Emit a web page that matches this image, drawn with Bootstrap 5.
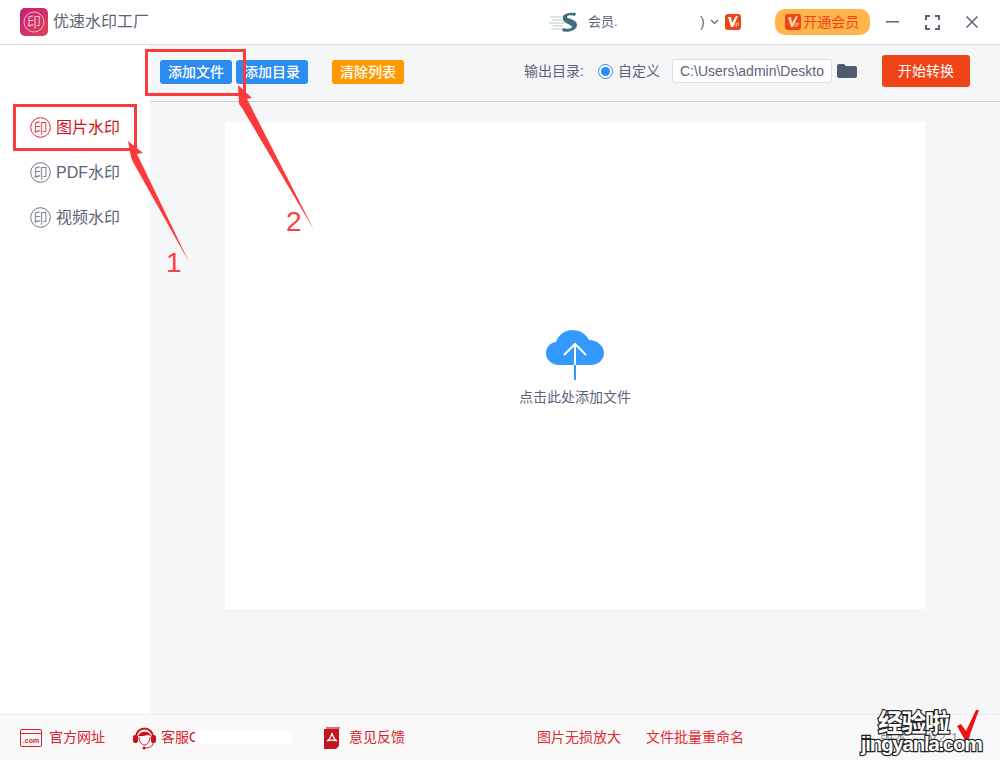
<!DOCTYPE html>
<html lang="zh-CN">
<head>
    <meta charset="UTF-8">
    <title>优速水印工厂</title>
    <link href="https://cdn.jsdelivr.net/npm/bootstrap@5.3.3/dist/css/bootstrap.min.css" rel="stylesheet">
    <style>
        body {
            background: #fff;
            color: #5a6478;
            font-family: "Liberation Sans", "Noto Sans CJK SC", sans-serif;
            font-size: 14px;
        }
        .app-shell { width: 1000px; height: 760px; overflow: hidden; position: relative; }

        .title-bar { height: 45px; border-bottom: 1px solid #dcdee2; padding-left: 20px; }
        .app-name { font-size: 16px; margin-left: 5px; width: 96px; white-space: nowrap; }
        .user-logo { margin-left: 400px; }
        .user-name { font-size: 13px; margin-left: 10px; width: 112px; }
        .user-chevron { margin-left: 5px; }
        .vip-small { margin-left: 6px; }
        .vip-pill {
            margin-left: 34px; width: 95px; height: 26px; border-radius: 10px;
            background: #ffb54c; color: #f14318;
        }
        .vip-pill span { margin-left: 2px; }
        .win-min { margin-left: 16px; }
        .win-max { margin-left: 26px; }
        .win-close { margin-left: 26px; }

        .middle-row { height: 669px; }
        .side-nav { width: 150px; padding-top: 60px; }
        .side-link { height: 45px; padding-left: 30px; font-size: 16px; color: #5a6478; }
        .side-link svg { margin-right: 5px; }
        .side-link text { fill-opacity: .8; }
        .side-link.current { color: #d0111b; }

        .work-area { width: 850px; background: #f5f6f8; }
        .tool-bar { height: 57px; border-bottom: 1px solid #cdcfd3; padding: 0 0 4px 10px; }
        .tool-btn {
            width: 72px; height: 24px; margin-top: 2px; padding: 0; border: 0; border-radius: 3px;
            color: #fff; font-size: 14px; font-weight: 500; line-height: 24px;
        }
        .tool-btn.blue { background: #2d8cf0; margin-right: 4px; }
        .tool-btn.amber { background: #ff9900; margin-left: 20px; }
        .out-label { font-size: 14px; margin-left: 120px; width: 60px; white-space: nowrap; }
        .radio-dot {
            width: 15px; height: 15px; margin-left: 14px; border-radius: 50%;
            border: 1px solid #2d8cf0; background: #fff; padding: 2px;
        }
        .radio-dot i { display: block; width: 100%; height: 100%; border-radius: 50%; background: #2d8cf0; }
        .radio-text { margin-left: 5px; }
        .path-box {
            width: 160px; height: 24px; margin-left: 12px; padding-left: 7px;
            background: #fff; border: 1px solid #dcdee2; border-radius: 3px;
            color: #5a6478; overflow: hidden; white-space: nowrap; line-height: 22px;
        }
        .folder-icon { margin-left: 5px; }
        .start-btn {
            width: 88px; height: 32px; margin-left: 25px; padding: 0; border: 0; border-radius: 3px;
            background: #f14318; color: #fff; font-size: 14px;
        }
        .drop-panel { width: 700px; height: 487px; margin: 20px 0 0 75px; background: #fff; }
        .drop-text { font-size: 14px; margin-top: 7px; }
        .drop-inner { padding-top: 7px; }

        .foot-bar { height: 46px; background: #f9f9fa; border-top: 1px solid #e8eaec; color: #d8212a; padding-left: 20px; }
        .foot-bar svg { flex: none; }
        .foot-web span { margin-left: 7px; }
        .foot-help { margin-left: 28px; }
        .foot-help span { margin-left: 5px; width: 131px; position: relative; }
        .redact { position: absolute; left: 34px; top: 3px; width: 97px; height: 14px; background: #fff; }
        .foot-mail { margin-left: 31px; }
        .foot-mail span { margin-left: 8px; }
        .foot-link-a { margin-left: 132px; color: #e02b33; }
        .foot-link-b { margin-left: 25px; color: #e02b33; }
        .version { margin-left: 136px; font-size: 13px; color: #8b93a3; letter-spacing: 1px; word-spacing: 16px; white-space: nowrap; }

        .mark-layer { position: absolute; left: 0; top: 0; pointer-events: none; }
        .mark-digit { font-family: "Liberation Sans", sans-serif; font-size: 28px; fill: #f94040; }
        .wm-cn { font-family: "Noto Sans CJK SC", sans-serif; font-size: 25px; font-weight: 700; }
        .wm-en { font-family: "Liberation Sans", sans-serif; font-size: 21px; font-weight: 700; }
        .wm-cn, .wm-en { fill: #fff; stroke: #222; stroke-width: 2.4px; paint-order: stroke; }
    </style>
</head>
<body>
<div class="app-shell d-flex flex-column">

    <!-- title bar -->
    <div class="title-bar d-flex align-items-center">
        <svg width="28" height="28" viewBox="0 0 28 28">
            <defs><linearGradient id="logoFill" x1="0" y1="0" x2="1" y2="1"><stop offset="0" stop-color="#c21f7a"/><stop offset="1" stop-color="#e0435a"/></linearGradient></defs>
            <rect width="28" height="28" rx="5" fill="url(#logoFill)"/>
            <circle cx="14" cy="14" r="10" fill="none" stroke="#f3b6c4" stroke-width="1"/>
            <text x="14" y="19" text-anchor="middle" font-size="14" fill="#f3b6c4" font-family="Noto Sans CJK SC">印</text>
        </svg>
        <span class="app-name">优速水印工厂</span>
        <svg class="user-logo" width="29" height="22" viewBox="0 0 29 22">
            <path d="M14 5c2-3 9-4 13-3l-1 3c-3-1-8-1-8 1 0 2 10 2 10 8 0 6-10 8-15 6l1-3c3 1 9 1 9-1 0-3-11-3-9-11z" fill="#3f6f7d"/>
            <path d="M1 6h12M3 9h11M0 12h15M4 15h10M2 18h12" stroke="#b4c8cc" stroke-width="1"/>
        </svg>
        <span class="user-name">会员.</span>
        <span>)</span>
        <svg class="user-chevron" width="9" height="6" viewBox="0 0 9 6"><path d="M1 1l3.500 3.500L8 1" fill="none" stroke="#5a6478" stroke-width="1.200"/></svg>
        <svg class="vip-small" width="16" height="16" viewBox="0 0 16 16">
            <rect width="16" height="16" rx="3" fill="#f14318"/>
            <path d="M3 3h3l1 6 4-7h2L8 13H6z" fill="#fff"/>
            <path d="M10 9v4M11.500 13V9h2v2h-2" fill="none" stroke="#ffd0c0" stroke-width=".7"/>
        </svg>
        <div class="vip-pill d-flex align-items-center justify-content-center">
            <svg width="16" height="16" viewBox="0 0 16 16">
                <rect width="16" height="16" rx="3" fill="#f14318"/>
                <path d="M3 3h3l1 6 4-7h2L8 13H6z" fill="#ffd9a0"/>
                <path d="M10 9v4M11.500 13V9h2v2h-2" fill="none" stroke="#ffd9a0" stroke-width=".7"/>
            </svg>
            <span>开通会员</span>
        </div>
        <svg class="win-min" width="13" height="2" viewBox="0 0 13 2"><rect width="13" height="1.500" fill="#5a6478"/></svg>
        <svg class="win-max" width="15" height="15" viewBox="0 0 15 15"><path d="M1 5V1h4M10 1h4v4M14 10v4h-4M5 14H1v-4" fill="none" stroke="#5a6478" stroke-width="2"/></svg>
        <svg class="win-close" width="12" height="12" viewBox="0 0 12 12"><path d="M.5.500l11 11M11.500.500l-11 11" stroke="#5a6478" stroke-width="1.500"/></svg>
    </div>

    <div class="middle-row d-flex">
        <!-- left nav -->
        <nav class="side-nav">
            <a class="side-link current d-flex align-items-center text-decoration-none" href="#">
                <svg width="21" height="21" viewBox="0 0 21 21"><circle cx="10.500" cy="10.500" r="9.800" fill="none" stroke="currentColor" stroke-width=".9"/><text x="10.500" y="15.500" text-anchor="middle" font-size="14" fill="currentColor" font-family="Noto Sans CJK SC">印</text></svg>
                图片水印
            </a>
            <a class="side-link d-flex align-items-center text-decoration-none" href="#">
                <svg width="21" height="21" viewBox="0 0 21 21"><circle cx="10.500" cy="10.500" r="9.800" fill="none" stroke="currentColor" stroke-width=".9"/><text x="10.500" y="15.500" text-anchor="middle" font-size="14" fill="currentColor" font-family="Noto Sans CJK SC">印</text></svg>
                PDF水印
            </a>
            <a class="side-link d-flex align-items-center text-decoration-none" href="#">
                <svg width="21" height="21" viewBox="0 0 21 21"><circle cx="10.500" cy="10.500" r="9.800" fill="none" stroke="currentColor" stroke-width=".9"/><text x="10.500" y="15.500" text-anchor="middle" font-size="14" fill="currentColor" font-family="Noto Sans CJK SC">印</text></svg>
                视频水印
            </a>
        </nav>

        <main class="work-area">
            <div class="tool-bar d-flex align-items-center">
                <button class="btn tool-btn blue">添加文件</button>
                <button class="btn tool-btn blue">添加目录</button>
                <button class="btn tool-btn amber">清除列表</button>
                <span class="out-label">输出目录:</span>
                <span class="radio-dot"><i></i></span>
                <span class="radio-text">自定义</span>
                <div class="path-box">C:\Users\admin\Deskto</div>
                <svg class="folder-icon" width="20" height="14" viewBox="0 0 20 14"><path d="M0 2a2 2 0 0 1 2-2h5l2 2h9a2 2 0 0 1 2 2v8a2 2 0 0 1-2 2H2a2 2 0 0 1-2-2z" fill="#525a72"/></svg>
                <button class="btn start-btn">开始转换</button>
            </div>
            <div class="drop-panel d-flex align-items-center justify-content-center">
                <div class="drop-inner d-flex flex-column align-items-center">
                    <svg width="58" height="50" viewBox="0 0 58 50">
                        <path d="M13 35C5 35 0 29 0 23c0-6 5-11 10-11 2-7 9-12 16-12 8 0 14 4 17 10 8 0 15 6 15 13 0 7-6 12-13 12z" fill="#3399ff"/>
                        <path d="M29 50V14M18 25l11-11 11 11" fill="none" stroke="#fff" stroke-width="2"/>
                        <path d="M29 35v15" stroke="#3399ff" stroke-width="2"/>
                    </svg>
                    <div class="drop-text">点击此处添加文件</div>
                </div>
            </div>
        </main>
    </div>

    <!-- footer -->
    <footer class="foot-bar d-flex align-items-center">
        <div class="foot-web d-flex align-items-center">
            <svg width="22" height="18" viewBox="0 0 22 18">
                <rect x=".5" y=".5" width="21" height="17" rx="1.500" fill="none" stroke="#d8212a"/>
                <path d="M1 4.500h20" stroke="#d8212a"/>
                <text x="11" y="14" text-anchor="middle" font-size="7" font-weight="700" fill="#d8212a" font-family="Liberation Sans">.com</text>
            </svg>
            <span>官方网址</span>
        </div>
        <div class="foot-help d-flex align-items-center">
            <svg width="23" height="24" viewBox="0 0 23 24">
                <path d="M3 11a8.500 8.500 0 0 1 17 0" fill="none" stroke="#d01018" stroke-width="2"/>
                <path d="M5 10c2-5 11-6 13 0l-3-1c-3 1-7 1-10 1z" fill="#d01018"/>
                <path d="M6 11c0 5 3 8 5.500 8s5.500-3 5.500-8" fill="none" stroke="#d01018"/>
                <rect y="9" width="5" height="8" rx="2" fill="#d01018"/>
                <rect x="18" y="9" width="5" height="8" rx="2" fill="#d01018"/>
                <path d="M20 17c0 3-3 5-8 5" fill="none" stroke="#d01018"/>
                <circle cx="11" cy="22" r="1.500" fill="#d01018"/>
            </svg>
            <span>客服C<b class="redact"></b></span>
        </div>
        <div class="foot-mail d-flex align-items-center">
            <svg width="18" height="22" viewBox="0 0 18 22">
                <path d="M1 2h15v17l-3 3H1z" fill="#c8141c"/>
                <path d="M3 0h14v2H3z" fill="#c8141c" opacity=".6"/>
                <path d="M9 6c-1 4-3 7-5 8 3-1 7-1 10 0-2-1-4-4-5-8z" fill="none" stroke="#fff" stroke-width="1.200"/>
            </svg>
            <span>意见反馈</span>
        </div>
        <span class="foot-link-a">图片无损放大</span>
        <span class="foot-link-b">文件批量重命名</span>
        <span class="version">版本 V2.1.2</span>
    </footer>

    <!-- red annotations and watermark drawn on top of the screenshot -->
    <svg class="mark-layer" width="1000" height="760" viewBox="0 0 1000 760">
        <rect x="14.500" y="105.500" width="121" height="44" fill="none" stroke="#fb3b3b" stroke-width="3"/>
        <rect x="146.500" y="50.500" width="98" height="44" fill="none" stroke="#fb3b3b" stroke-width="3"/>
        <polygon points="128,141 143,153 137,154 189,262 133,162 131,157" fill="#fb3b3b"/>
        <polygon points="238,85 252,98 247,99 314,230 242,108 239,104" fill="#fb3b3b"/>
        <text class="mark-digit" x="166" y="272">1</text>
        <text class="mark-digit" x="286" y="231">2</text>
        <text class="wm-cn" x="878" y="732" textLength="72">经验啦</text>
        <path d="M957 726l4-2 5 7 10-21 3 0-11 30h-3z" fill="#f01010"/>
        <text class="wm-en" x="861" y="751" textLength="122">jingyanla.com</text>
    </svg>
</div>
<script src="https://cdn.jsdelivr.net/npm/bootstrap@5.3.3/dist/js/bootstrap.bundle.min.js"></script>
</body>
</html>
